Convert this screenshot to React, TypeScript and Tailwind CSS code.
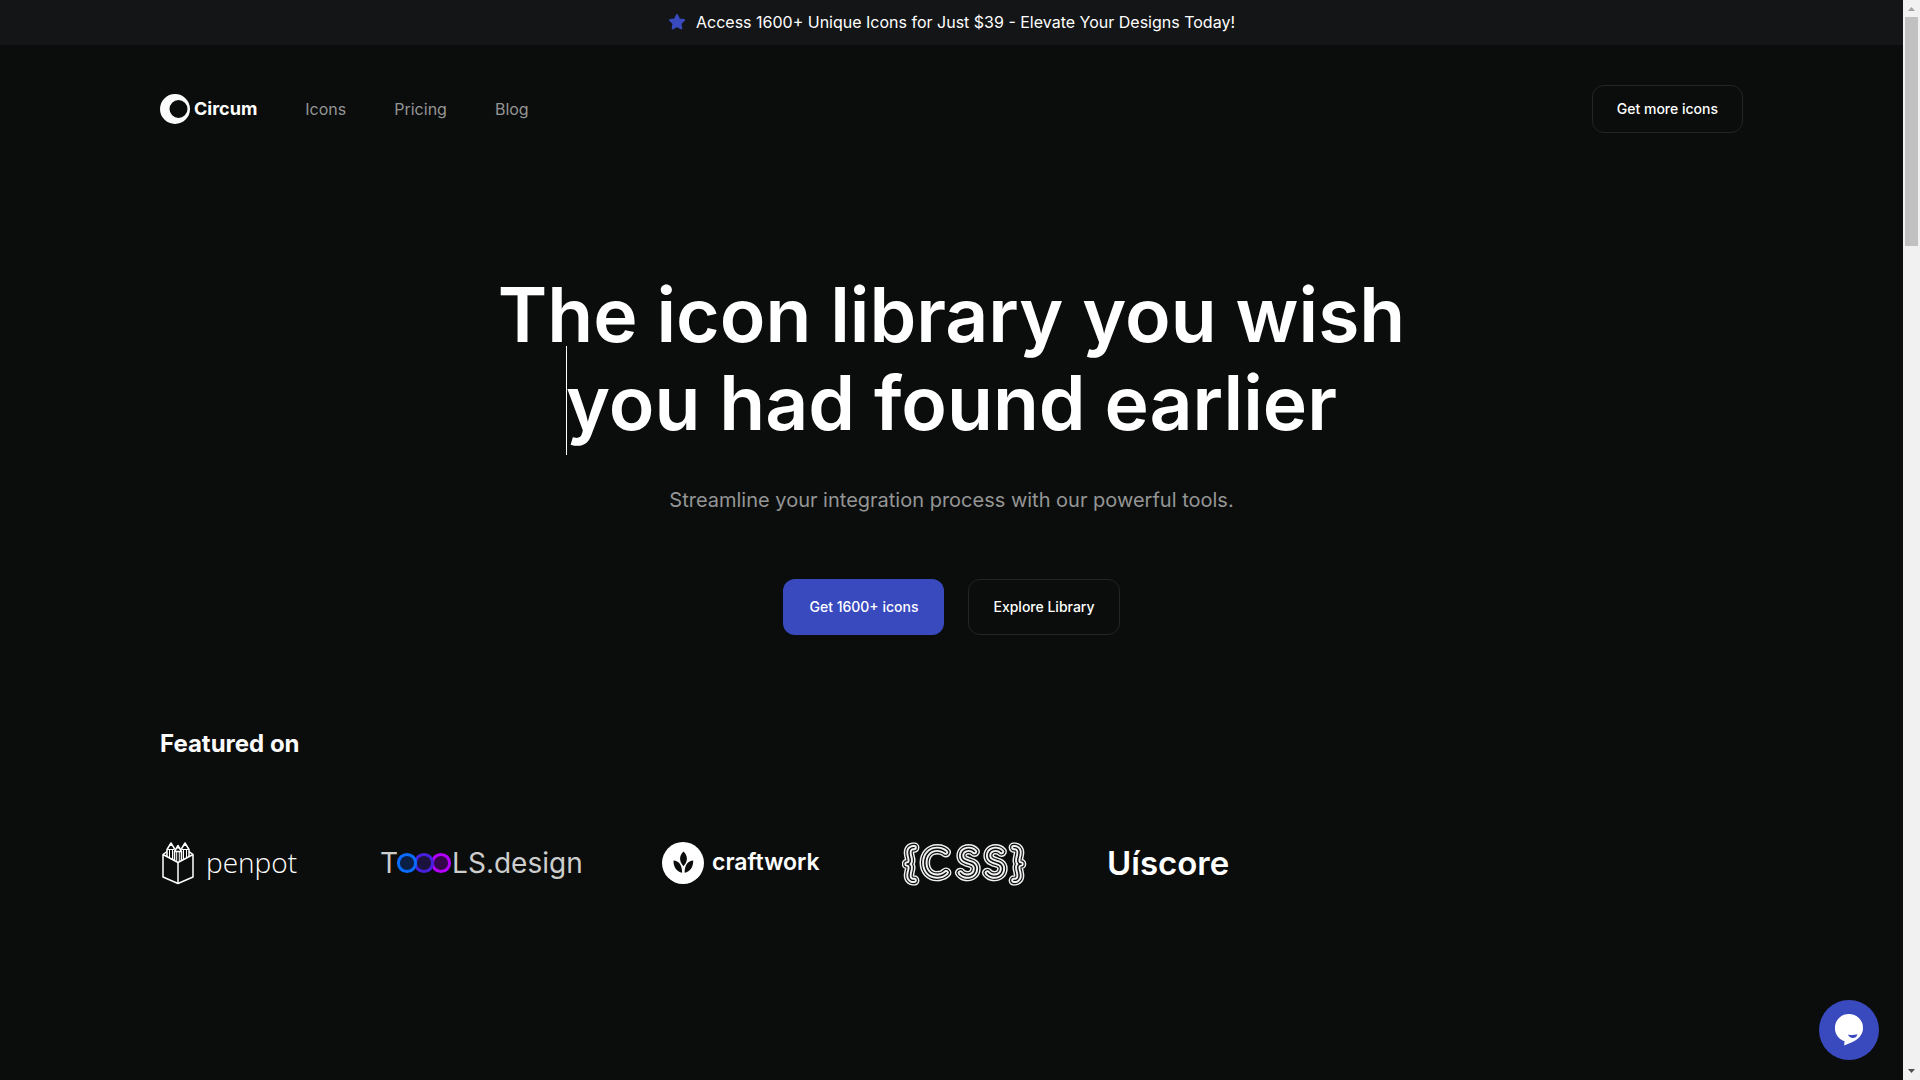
import React from "react";

function StarIcon() {
  return (
    <svg viewBox="0 0 24 24" className="size-[18px]" aria-hidden="true">
      <path
        d="M12 2.6l2.9 5.9 6.5.95-4.7 4.6 1.1 6.45L12 17.45 6.2 20.5l1.1-6.45-4.7-4.6 6.5-.95z"
        fill="#394abf"
        stroke="#394abf"
        strokeWidth="2.6"
        strokeLinejoin="round"
      />
    </svg>
  );
}

function CircumMark() {
  return (
    <svg viewBox="0 0 30 30" className="size-[30px]" aria-hidden="true">
      <path
        fillRule="evenodd"
        fill="#fbfbfb"
        d="M15 0a15 15 0 1 1 0 30a15 15 0 1 1 0-30zM18.500 6a9 9 0 1 0 0 18a9 9 0 1 0 0-18z"
      />
    </svg>
  );
}

function Penpot() {
  return (
    <div className="flex w-[140px] items-center gap-[10px]">
      <svg
        viewBox="0 0 36 44"
        className="h-11 w-9 shrink-0"
        fill="none"
        stroke="#fff"
        strokeWidth="1.5"
        strokeLinejoin="round"
        aria-hidden="true"
      >
        <path d="M3 13.500v22.500L18 42.500l15-6.500V13.500L18 21.500z" />
        <path d="M18 21.500v21M3 13.500l4-2.800M33 13.500l-4-2.800" />
        <path d="M7 15.500V8.500l4-6.500 4 6.500M21 8.500l4-6.500 4 6.500v7" />
        <path d="M7 8.500h7M22 8.500h7M9.500 8.500V17M12.500 8.500v9.500M23.500 8.500v9.500M26.500 8.500V17" strokeWidth="1" />
        <path d="M14.500 19.500V10.500L18 4.500l3.500 6v9M14.500 10.500h7" />
        <path d="M16.700 10.500v10M19.300 10.500v10" strokeWidth="1" />
        <path d="M10 4h2M17 6.500h2M24 4h2" strokeWidth="2" />
      </svg>
      <span className="pb-0.5 font-['Open_Sans'] text-[28px] leading-9 font-light">penpot</span>
    </div>
  );
}

function Toools() {
  return (
    <div className="flex w-[202px] items-center font-['Inter'] text-[28px] leading-9 text-[#cdcdcd]">
      <span>T</span>
      <svg viewBox="0 0 56 22" className="-ml-0.5 h-[22px] w-14 shrink-0" fill="none" strokeWidth="3" aria-hidden="true">
        <circle cx="45" cy="11" r="8.600" stroke="#b300ff" fill="#330747" />
        <circle cx="28" cy="11" r="8.600" stroke="#4720de" fill="#1b123e" />
        <circle cx="11" cy="11" r="8.600" stroke="#0a6cff" fill="#0b1f45" />
      </svg>
      <span>LS.design</span>
    </div>
  );
}

function Craftwork() {
  return (
    <div className="flex w-40 items-center gap-2">
      <svg viewBox="0 0 42 42" className="size-[42px] shrink-0" aria-hidden="true">
        <circle cx="21" cy="21" r="21" fill="#fff" />
        <g fill="#0b0d0c">
          <path d="M21.500 9.500c4.200 4 4.500 8.800 1 13.500l-1 1.200-1-1.200c-3.500-4.700-3.200-9.500 1-13.500z" />
          <path d="M11.500 18.500c5.300.4 8.600 4.200 8.600 12.300c-5.600-1.400-8.700-5.500-8.600-12.300z" />
          <path d="M31.200 18.500c-5.300.4-8.600 4.200-8.600 12.300c5.600-1.400 8.700-5.500 8.600-12.300z" />
        </g>
      </svg>
      <span className="pb-0.5 font-['Inter'] text-[23px] leading-9 font-semibold">craftwork</span>
    </div>
  );
}

function CssLogo() {
  return (
    <svg viewBox="0 0 125 48" className="h-12 w-[125px] shrink-0 opacity-95 will-change-transform">
      <defs>
        <text
          id="css-word"
          fontFamily="Lato, sans-serif"
          fontWeight="100"
          fontSize="38"
          x="3 20 56 83 110"
          y="37"
          textRendering="geometricPrecision"
        >
          {"{CSS}"}
        </text>
      </defs>
      <g strokeLinejoin="round">
        <use href="#css-word" stroke="#fff" strokeWidth="10" />
        <use href="#css-word" stroke="#0b0d0c" strokeWidth="7.200" />
        <use href="#css-word" stroke="#fff" strokeWidth="4.800" />
        <use href="#css-word" stroke="#0b0d0c" fill="#0b0d0c" strokeWidth="1" />
      </g>
    </svg>
  );
}

function ScrollRail() {
  return (
    <div className="sticky top-0 flex h-screen w-[17px] shrink-0 flex-col items-center justify-between bg-[#f1f1f1] py-1" aria-hidden="true">
      <div className="flex flex-col items-center gap-[6px] pt-[3px]">
        <svg viewBox="0 0 7 4" className="h-1 w-[7px]">
          <path d="M0 4L3.500 0L7 4z" fill="#a3a3a3" />
        </svg>
        <div className="h-[229px] w-[13px] bg-[#c1c1c1]" />
      </div>
      <svg viewBox="0 0 7 4" className="mb-[3px] h-1 w-[7px]">
        <path d="M0 0L3.500 4L7 0z" fill="#505050" />
      </svg>
    </div>
  );
}

const links = ["Icons", "Pricing", "Blog"];

export default function App() {
  return (
    <div className="flex min-h-screen bg-[#0b0d0c] font-['Inter',sans-serif] text-white">
      <div className="min-w-0 flex-1">
        <a href="#pricing" className="flex h-[45px] items-center justify-center gap-[10px] bg-[#141517] pb-0.5 text-base">
          <StarIcon />
          <span>Access 1600+ Unique Icons for Just $39 - Elevate Your Designs Today!</span>
        </a>

        <header className="flex items-center justify-between px-40 py-10">
          <nav className="flex items-center gap-12">
            <a href="#home" className="flex items-center gap-1 text-lg font-bold">
              <CircumMark />
              <span>Circum</span>
            </a>
            {links.map((l) => (
              <a key={l} href={"#" + l.toLowerCase()} className="text-base text-[#949595]">
                {l}
              </a>
            ))}
          </nav>
          <button className="h-12 rounded-xl border border-[#222427] px-6 text-sm font-medium">Get more icons</button>
        </header>

        <main className="px-40">
          <section className="flex flex-col items-center pt-[98px] text-center">
            <h1 className="text-[75px] leading-[88px] font-semibold">
              The icon library you wish
              <br />
              <span className="relative inline-block">
                <span className="absolute -top-[13px] left-0 h-[109px] w-px bg-white" />
                you had found earlier
              </span>
            </h1>
            <p className="mt-[37px] text-xl leading-8 text-[#949595]">
              Streamline your integration process with our powerful tools.
            </p>
            <div className="mt-[63px] flex gap-6">
              <button className="h-14 rounded-xl bg-[#394abf] px-[26px] text-sm font-medium">Get 1600+ icons</button>
              <button className="h-14 rounded-xl border border-[#222427] px-6 text-sm font-medium">Explore Library</button>
            </div>
          </section>

          <section className="pt-[93px]">
            <h2 className="text-2xl leading-8 font-bold text-[#fbfbfb]">Featured on</h2>
            <div className="mt-[79px] flex h-12 items-center gap-20">
              <Penpot />
              <Toools />
              <Craftwork />
              <CssLogo />
              <span className="font-['Inter'] text-[33px] leading-10 font-semibold">Uíscore</span>
            </div>
          </section>
        </main>
      </div>

      <ScrollRail />

      <button
        aria-label="Open chat"
        className="fixed right-[41px] bottom-5 flex size-[60px] items-center justify-center rounded-full bg-[#394abf]"
      >
        <svg viewBox="0 0 28 32" className="h-8 w-7" aria-hidden="true">
          <path d="M14 0a14 14 0 0 1 14 14c0 7-5 11.500-10.500 14L9.200 31.500L9.500 27.300A14 14 0 0 1 14 0z" fill="#fff" />
          <path d="M13 20.500c3 .8 6 .7 9.500-.3c-.7 2.800-2.500 3.700-4.600 3.700c-2.300 0-4.200-1.200-4.900-3.400z" fill="#394abf" />
        </svg>
      </button>
    </div>
  );
}
